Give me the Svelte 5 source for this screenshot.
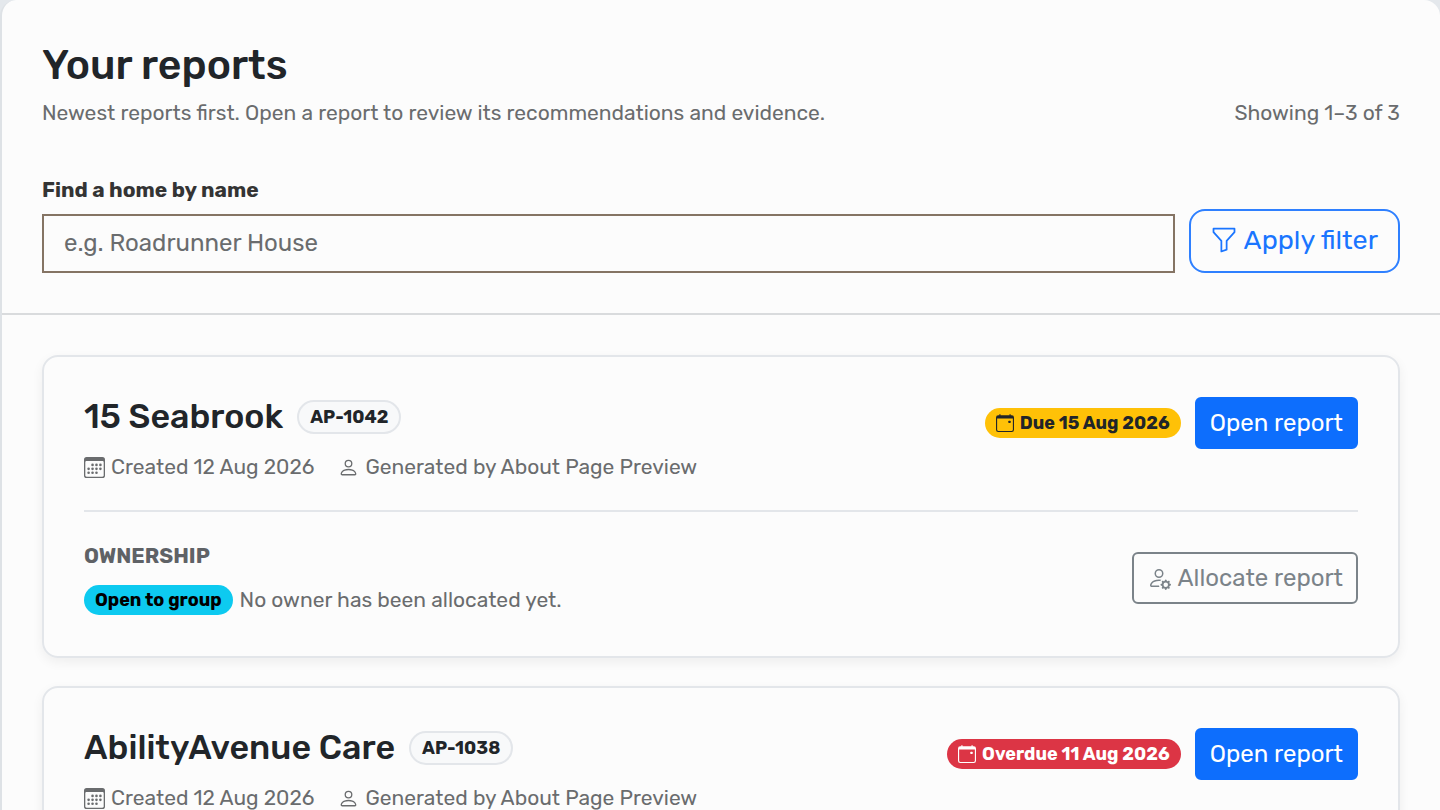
<script lang="ts">
	interface Report {
		home: string;
		ref: string;
		created: string;
		author: string;
		due: string;
		overdue: boolean;
	}

	const reports: Report[] = [
		{
			home: '15 Seabrook',
			ref: 'AP-1042',
			created: '12 Aug 2026',
			author: 'About Page Preview',
			due: '15 Aug 2026',
			overdue: false
		},
		{
			home: 'AbilityAvenue Care',
			ref: 'AP-1038',
			created: '12 Aug 2026',
			author: 'About Page Preview',
			due: '11 Aug 2026',
			overdue: true
		}
	];

	let search = $state('');
</script>

<main class="panel">
	<header class="panel-header">
		<h1>Your reports</h1>
		<div class="intro">
			<p>Newest reports first. Open a report to review its recommendations and evidence.</p>
			<p>Showing 1–3 of 3</p>
		</div>

		<form class="filter" onsubmit={(e) => e.preventDefault()}>
			<div class="field">
				<label for="home-search">Find a home by name</label>
				<input id="home-search" type="text" placeholder="e.g. Roadrunner House" bind:value={search} />
			</div>
			<button type="submit" class="btn btn-filter">
				<svg class="icon" viewBox="0 0 16 16" aria-hidden="true">
					<path d="M1.5 1.5A.5.5 0 0 1 2 1h12a.5.5 0 0 1 .5.5v2a.5.5 0 0 1-.128.334L10 8.692V13.5a.5.5 0 0 1-.342.474l-3 1A.5.5 0 0 1 6 14.5V8.692L1.628 3.834A.5.5 0 0 1 1.5 3.5zm1 .5v1.308l4.372 4.858A.5.5 0 0 1 7 8.5v5.306l2-.666V8.5a.5.5 0 0 1 .128-.334L13.5 3.308V2z" />
				</svg>
				Apply filter
			</button>
		</form>
	</header>

	<div class="report-list">
		{#each reports as report (report.ref)}
			<article class="card">
				<div class="card-top">
					<div class="summary">
						<div class="title-row">
							<h2>{report.home}</h2>
							<span class="ref">{report.ref}</span>
						</div>
						<div class="meta">
							<span>
								<svg class="icon" viewBox="0 0 16 16" aria-hidden="true">
									<path d="M14 0H2a2 2 0 0 0-2 2v12a2 2 0 0 0 2 2h12a2 2 0 0 0 2-2V2a2 2 0 0 0-2-2M1 3.857C1 3.384 1.448 3 2 3h12c.552 0 1 .384 1 .857v10.286c0 .473-.448.857-1 .857H2c-.552 0-1-.384-1-.857z" />
									<path d="M6.5 7a1 1 0 1 0 0-2 1 1 0 0 0 0 2m3 0a1 1 0 1 0 0-2 1 1 0 0 0 0 2m3 0a1 1 0 1 0 0-2 1 1 0 0 0 0 2m-9 3a1 1 0 1 0 0-2 1 1 0 0 0 0 2m3 0a1 1 0 1 0 0-2 1 1 0 0 0 0 2m3 0a1 1 0 1 0 0-2 1 1 0 0 0 0 2m3 0a1 1 0 1 0 0-2 1 1 0 0 0 0 2m-9 3a1 1 0 1 0 0-2 1 1 0 0 0 0 2m3 0a1 1 0 1 0 0-2 1 1 0 0 0 0 2m3 0a1 1 0 1 0 0-2 1 1 0 0 0 0 2" />
								</svg>
								Created {report.created}
							</span>
							<span>
								<svg class="icon" viewBox="0 0 16 16" aria-hidden="true">
									<path d="M8 8a3 3 0 1 0 0-6 3 3 0 0 0 0 6m2-3a2 2 0 1 1-4 0 2 2 0 0 1 4 0m4 8c0 1-1 1-1 1H3s-1 0-1-1 1-4 6-4 6 3 6 4m-1-.004c-.001-.246-.154-.986-.832-1.664C11.516 10.68 10.289 10 8 10s-3.516.68-4.168 1.332c-.678.678-.83 1.418-.832 1.664z" />
								</svg>
								Generated by {report.author}
							</span>
						</div>
					</div>
					<div class="actions">
						<span class="badge" class:overdue={report.overdue}>
							<svg class="icon" viewBox="0 0 16 16" aria-hidden="true">
								<path d="M11 6.5a.5.5 0 0 1 .5-.5h1a.5.5 0 0 1 .5.5v1a.5.5 0 0 1-.5.5h-1a.5.5 0 0 1-.5-.5z" />
								<path d="M3.5 0a.5.5 0 0 1 .5.5V1h8V.5a.5.5 0 0 1 1 0V1h1a2 2 0 0 1 2 2v11a2 2 0 0 1-2 2H2a2 2 0 0 1-2-2V3a2 2 0 0 1 2-2h1V.5a.5.5 0 0 1 .5-.5M1 4v10a1 1 0 0 0 1 1h12a1 1 0 0 0 1-1V4z" />
							</svg>
							{report.overdue ? 'Overdue' : 'Due'} {report.due}
						</span>
						<a class="btn btn-open" href="#{report.ref}">Open report</a>
					</div>
				</div>

				<div class="card-bottom">
					<div>
						<h3>Ownership</h3>
						<p class="owner"><span class="badge group">Open to group</span> No owner has been allocated yet.</p>
					</div>
					<button type="button" class="btn btn-allocate">
						<svg class="icon" viewBox="0 0 16 16" aria-hidden="true">
							<path d="M11 5a3 3 0 1 1-6 0 3 3 0 0 1 6 0M8 7a2 2 0 1 0 0-4 2 2 0 0 0 0 4m.256 7a4.5 4.5 0 0 1-.229-1.004H3c.001-.246.154-.986.832-1.664C4.484 10.68 5.711 10 8 10q.39 0 .74.025c.226-.341.496-.65.804-.918Q8.844 9.002 8 9c-5 0-6 3-6 4s1 1 1 1zm3.63-4.54c.18-.613 1.048-.613 1.229 0l.043.148a.64.64 0 0 0 .921.382l.136-.074c.561-.306 1.175.308.87.869l-.075.136a.64.64 0 0 0 .382.92l.149.045c.612.18.612 1.048 0 1.229l-.15.043a.64.64 0 0 0-.38.921l.074.136c.305.561-.309 1.175-.87.87l-.136-.075a.64.64 0 0 0-.92.382l-.045.149c-.18.612-1.048.612-1.229 0l-.043-.15a.64.64 0 0 0-.921-.38l-.136.074c-.561.305-1.175-.309-.87-.87l.075-.136a.64.64 0 0 0-.382-.92l-.148-.045c-.613-.18-.613-1.048 0-1.229l.148-.043a.64.64 0 0 0 .382-.921l-.074-.136c-.306-.561.308-1.175.869-.87l.136.075a.64.64 0 0 0 .92-.382zM14 12.5a1.5 1.5 0 1 0-3 0 1.5 1.5 0 0 0 3 0" />
						</svg>
						Allocate report
					</button>
				</div>
			</article>
		{/each}
	</div>
</main>

<style>
	:global(body) {
		margin: 0;
		background: #e4e8ec;
		font-family: Rubik, Roboto, sans-serif;
		color: #212529;
	}

	.panel {
		border-left: 2px solid #dee2e6;
		border-radius: 16px 16px 0 0;
		background: #fcfcfc;
	}

	.panel-header {
		padding: 40px;
		border-bottom: 2px solid #d9dbdd;
	}

	h1,
	h2,
	h3,
	p {
		margin: 0;
	}

	h1 {
		font-size: 41px;
		line-height: 50px;
		font-weight: 500;
	}

	.intro {
		display: flex;
		justify-content: space-between;
		gap: 24px;
		margin-top: 7px;
		font-size: 21px;
		line-height: 32px;
		color: #6a6c6e;
	}

	.filter {
		display: flex;
		align-items: flex-end;
		gap: 14px;
		margin-top: 45px;
	}

	.field {
		flex: 1;
	}

	label {
		display: block;
		margin-bottom: 8px;
		font-size: 21px;
		line-height: 32px;
		font-weight: 700;
		color: #343434;
	}

	input {
		box-sizing: border-box;
		display: block;
		width: 100%;
		height: 59px;
		padding: 0 20px 2px;
		border: 2px solid #857464;
		border-radius: 0;
		background: #fcfcfc;
		font: inherit;
		font-size: 24px;
		color: inherit;
	}

	input::placeholder {
		color: #6a6c6e;
		opacity: 1;
	}

	.icon {
		flex: none;
		width: 21px;
		height: 21px;
		fill: currentColor;
	}

	.btn {
		box-sizing: border-box;
		display: flex;
		align-items: center;
		justify-content: center;
		gap: 6px;
		height: 52px;
		padding: 0 13px;
		border: 2px solid;
		border-radius: 6px;
		background: transparent;
		font: inherit;
		font-size: 24px;
		white-space: nowrap;
		text-decoration: none;
	}

	.btn-filter {
		height: 64px;
		padding: 0 20px 3px 19px;
		border-color: #2f80ff;
		border-radius: 16px;
		font-size: 27px;
		color: #1a75ff;
	}

	.btn-filter .icon {
		width: 28px;
		height: 28px;
	}

	.btn-open {
		border-color: #0d6efd;
		background: #0d6efd;
		color: #fff;
	}

	.btn-allocate {
		color: #7b8389;
	}

	.btn-allocate .icon {
		width: 24px;
		height: 24px;
	}

	.report-list {
		display: flex;
		flex-direction: column;
		gap: 28px;
		padding: 40px;
	}

	.card {
		padding: 40px;
		border: 2px solid #e3e6ea;
		border-radius: 16px;
		box-shadow: 0 4px 12px rgba(0, 0, 0, 0.06);
	}

	.card-top,
	.card-bottom,
	.actions,
	.title-row,
	.meta,
	.meta span {
		display: flex;
	}

	.card-top,
	.card-bottom {
		justify-content: space-between;
	}

	.title-row {
		align-items: center;
		gap: 14px;
	}

	h2 {
		font-size: 34px;
		line-height: 40px;
		font-weight: 500;
	}

	.ref {
		padding: 2px 11px;
		border: 2px solid #e3e6ea;
		border-radius: 20px;
		background: #f8f9fa;
		font-size: 18px;
		line-height: 26px;
		font-weight: 700;
	}

	.meta {
		gap: 24px;
		margin-top: 14px;
		font-size: 21px;
		line-height: 32px;
		color: #6a6c6e;
	}

	.meta span {
		align-items: center;
		gap: 6px;
	}

	.actions {
		align-items: center;
		align-self: flex-start;
		gap: 14px;
	}

	.badge {
		display: flex;
		align-items: center;
		gap: 6px;
		padding: 2px 11px;
		border-radius: 16px;
		background: #ffc107;
		font-size: 18px;
		line-height: 26px;
		font-weight: 700;
	}

	.badge .icon {
		width: 18px;
		height: 18px;
	}

	.badge.overdue {
		background: #dc3545;
		color: #fff;
	}

	.badge.group {
		background: #0dcaf0;
		color: #000;
	}

	.card-bottom {
		align-items: center;
		margin-top: 27px;
		padding-top: 28px;
		border-top: 2px solid #e3e6ea;
	}

	h3 {
		font-size: 21px;
		line-height: 32px;
		font-weight: 700;
		text-transform: uppercase;
		color: #5f6266;
	}

	.owner {
		display: flex;
		align-items: center;
		gap: 7px;
		margin-top: 12px;
		font-size: 21px;
		line-height: 32px;
		color: #6a6c6e;
	}
</style>
